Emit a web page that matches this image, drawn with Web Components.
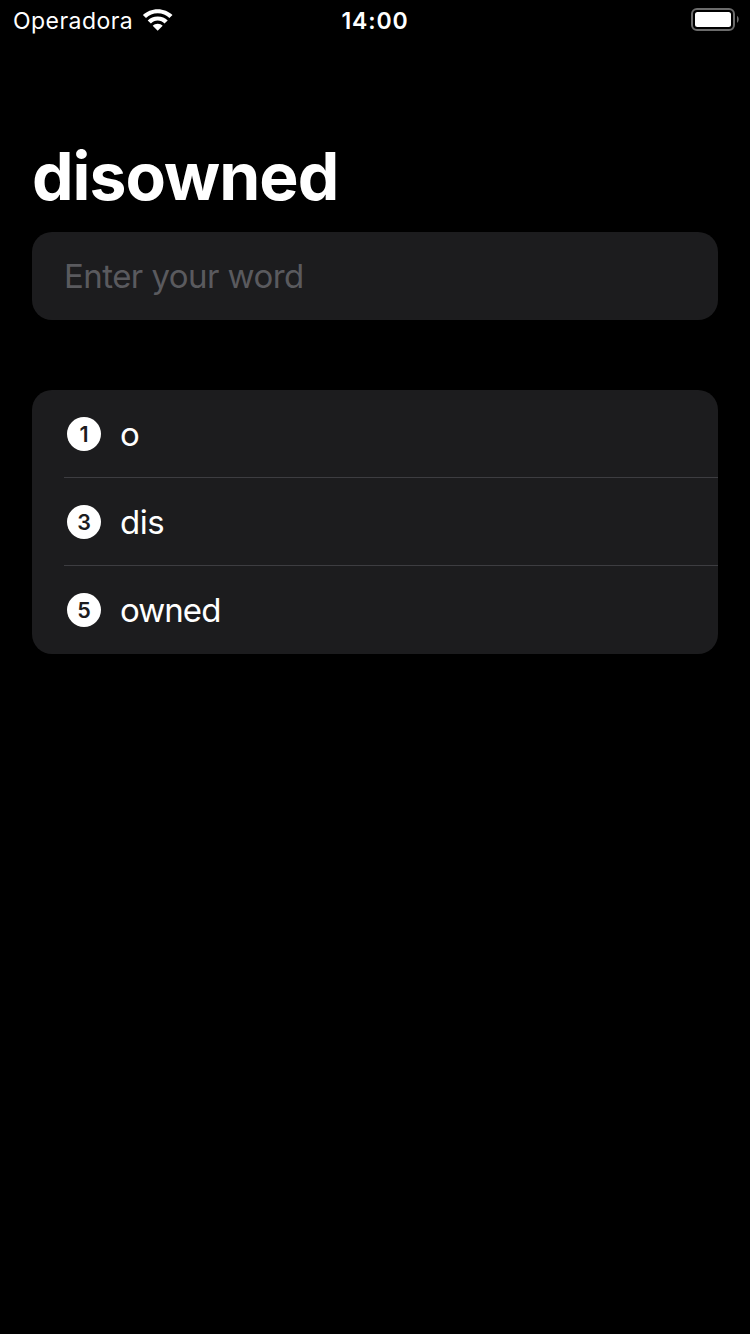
<!DOCTYPE html>
<html lang="en">
<head>
<meta charset="utf-8">
<title>disowned</title>
<style>
html,body{margin:0;background:#000;height:100%}
body{font-family:Inter,"Liberation Sans",sans-serif;color:#fff;overflow:hidden}
</style>
</head>
<body>
<word-game></word-game>
<script>
const define=(name,html)=>customElements.define(name,class extends HTMLElement{
  constructor(){super();this.attachShadow({mode:'open'}).innerHTML=html;}
});
define('status-bar',`<style>
:host{display:grid;grid-template-columns:1fr auto 1fr;align-items:start;height:40px;font-size:23px;line-height:40px}
.left{display:flex;align-items:flex-start;padding-left:13px}
.carrier{letter-spacing:.45px;width:129px;white-space:nowrap;padding-top:1px}
.time{font-weight:600;letter-spacing:.9px;padding-top:1px}
.right{display:flex;justify-content:flex-end;padding-right:10px}
svg{display:block;margin-top:8px}
</style>
<div class="left"><span class="carrier"><slot name="carrier"></slot></span>
<svg width="32" height="24" viewBox="0 0 32 24" fill="#fff">
<path d="M15.700 1.200C21.500 1.200 26.800 3.500 30.500 7L27.400 10C24.300 7.100 20.300 5.300 15.700 5.300S7.100 7.100 4 10L.9 7C4.600 3.500 9.900 1.200 15.700 1.200Z"/>
<path d="M15.700 8.500C19.700 8.500 23.200 10 25.700 12.400L22.500 15.400C20.700 13.700 18.300 12.600 15.700 12.600S10.700 13.700 8.900 15.400L5.700 12.400C8.200 10 11.700 8.500 15.700 8.500Z"/>
<path d="M15.700 15.800C17.700 15.800 19.500 16.600 20.700 17.800L15.700 22.800L10.700 17.800C11.900 16.600 13.700 15.800 15.700 15.800Z"/></svg></div>
<span class="time"><slot name="time"></slot></span>
<div class="right"><svg width="50" height="24" viewBox="0 0 50 24">
<rect x="2" y="1" width="42" height="21" rx="5" fill="none" stroke="#6b6b6b" stroke-width="2"/>
<rect x="5" y="4" width="36" height="15" rx="2.500" fill="#fff"/>
<path d="M47 7.700C49.300 9 49.300 13.500 47 14.800Z" fill="#6b6b6b"/></svg></div>`);
define('word-title',`<style>
:host{display:block;height:88px;line-height:88px;font-size:66px;font-weight:700;letter-spacing:-.98px}
h1{font:inherit;margin:0}
</style><h1><slot></slot></h1>`);
define('word-field',`<style>
:host{display:block;height:88px;box-sizing:border-box;padding:0 32px;border-radius:20px;background:#1c1c1e;color:#5a5a5e;font-size:33px;line-height:88px;letter-spacing:-.55px}
</style><slot></slot>`);
define('word-list',`<style>
:host{display:block;border-radius:20px;background:#1c1c1e;overflow:hidden}
</style><slot></slot>`);
define('word-row',`<style>
:host{display:flex;height:88px;padding-left:32px}
.content{flex:1;display:flex;align-items:center;box-sizing:border-box;border-bottom:1px solid #3d3d41;padding-left:3px;gap:19px}
:host(:last-child) .content{border-bottom-color:transparent}
.badge{width:34px;height:34px;border-radius:50%;background:#fff;color:#1c1c1e;font-size:21.5px;font-weight:600;line-height:34px;text-align:center}
.word{font-size:33px;line-height:87px;padding-top:1px;letter-spacing:-.5px}
:host(:last-child) .word{letter-spacing:-.95px}
</style><div class="content"><span class="badge"><slot name="count"></slot></span><span class="word"><slot></slot></span></div>`);
define('word-game',`<style>
:host{display:block;height:1334px;background:#000}
main{display:flex;flex-direction:column;padding:92px 32px 0}
word-list{margin-top:70px}
word-title{margin-bottom:12px}
</style>
<status-bar><span slot="carrier">Operadora</span><span slot="time">14:00</span></status-bar>
<main><word-title>disowned</word-title><word-field>Enter your word</word-field>
<word-list><word-row><span slot="count">1</span>o</word-row><word-row><span slot="count">3</span>dis</word-row><word-row><span slot="count">5</span>owned</word-row></word-list></main>`);
</script>
</body>
</html>
